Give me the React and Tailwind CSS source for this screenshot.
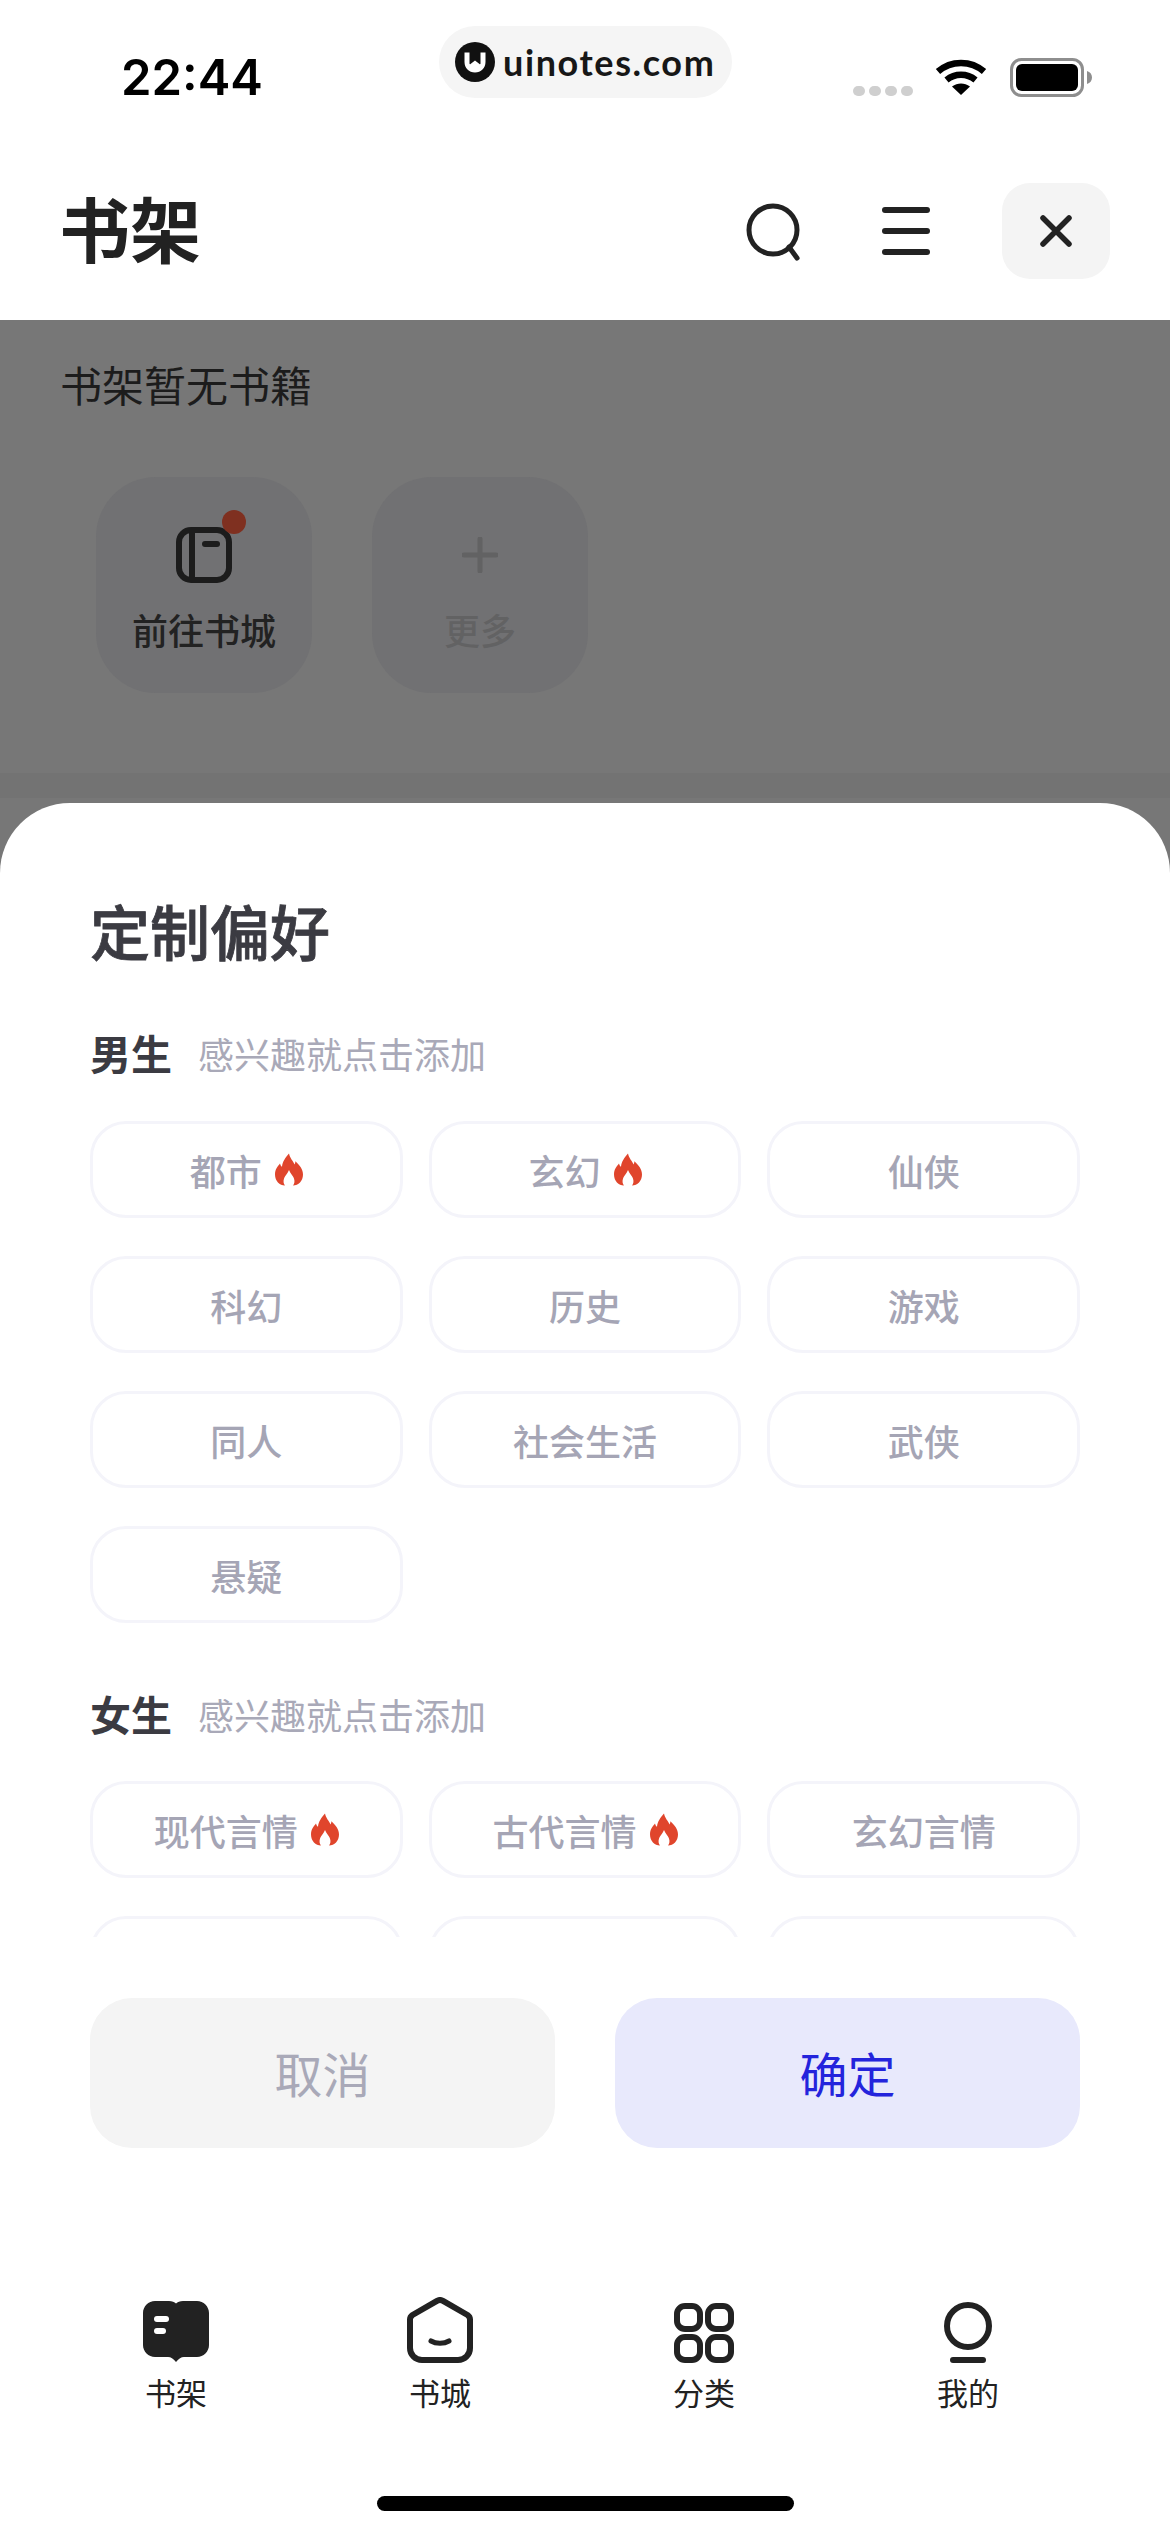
const CJK = { fontFamily: '"Noto Sans CJK SC", "Noto Sans", sans-serif' };

function Flame({ className }) {
  return (
    <svg viewBox="0 0 28 32" className={className}>
      <path
        fill="#e0452c"
        fillRule="evenodd"
        d="M14 0c1 5 4 7 5.500 11 .6-1 .9-2 .9-3.300C24.500 11.500 28 15.500 28 21c0 6.500-4.500 11-10 11 1.500-2 2-4.500.8-7.500-1-2.500-3.300-4.500-4.800-8-1.500 3.500-3.800 5.500-4.800 8C8 27.500 8.500 30 10 32 4.500 32 0 27.500 0 21c0-5 2.500-8 5-11 .4 1.500 1 2.500 2 3.300C7.500 8 10.500 4 14 0z"
      />
    </svg>
  );
}

function Chip({ label, hot }) {
  return (
    <div className="h-[97px] rounded-[36px] border-[3px] border-[#f4f4fa] bg-white flex items-center justify-center gap-[13px] text-[36px] font-medium text-[#a5a5b5]">
      <span>{label}</span>
      {hot && <Flame className="w-[28px] h-[33px]" />}
    </div>
  );
}

function SectionHead({ title }) {
  return (
    <div className="flex items-center h-[50px]">
      <span className="text-[41px] font-semibold text-[#3b3b42] w-[108px]">{title}</span>
      <span className="text-[36px] text-[#a9a9b8]">感兴趣就点击添加</span>
    </div>
  );
}

function NavItem({ label, children }) {
  return (
    <div className="w-[264px] flex flex-col items-center">
      <div className="h-[70px] flex items-end justify-center">{children}</div>
      <div className="mt-[11px] text-[31px] leading-[36px] text-[#222]">{label}</div>
    </div>
  );
}

function Logo() {
  return (
    <svg viewBox="0 0 40 40" className="w-[40px] h-[40px] shrink-0">
      <circle cx="20" cy="20" r="20" fill="#111" />
      <path
        fill="#fff"
        d="M9.500 10.500h5v11c0 .8.5 1 1 .6l4.500-3.600 4.500 3.600c.5.4 1 .2 1-.6v-11h5V20c0 6-4.500 10.500-10.500 10.500S9.500 26 9.500 20z"
      />
    </svg>
  );
}

export default function App() {
  return (
    <div className="w-[1170px] h-[2532px] overflow-hidden bg-white flex flex-col" style={CJK}>
      {/* Status bar */}
      <div className="h-[104px] relative shrink-0 flex justify-between items-start">
        <div
          className="mt-[52px] ml-[121px] text-[49px] leading-[52px] font-semibold text-black"
          style={{ fontFamily: 'Inter, sans-serif' }}
        >
          22:44
        </div>
        <div className="absolute left-[439px] top-[26px] w-[293px] h-[72px] rounded-[36px] bg-[#f5f5f5] flex items-center pl-[16px] gap-[8px]">
          <Logo />
          <span
            className="text-[36px] font-bold text-[#171717] tracking-[1.600px] leading-[40px]"
            style={{ fontFamily: 'Lato, sans-serif' }}
          >
            uinotes.com
          </span>
        </div>
        <div className="mt-[58px] mr-[78px] flex items-start">
          <div className="mt-[28px] flex gap-[4px]">
            <div className="w-[12px] h-[10px] rounded-full bg-[#cfcfcf]" />
            <div className="w-[12px] h-[10px] rounded-full bg-[#cfcfcf]" />
            <div className="w-[12px] h-[10px] rounded-full bg-[#cfcfcf]" />
            <div className="w-[12px] h-[10px] rounded-full bg-[#cfcfcf]" />
          </div>
          <svg viewBox="0 0 52 36" className="w-[52px] h-[36px] ml-[22px] mt-[1px]">
            <path fill="none" stroke="#000" strokeWidth="6.500" d="M3 12.500C16 1 36 1 49 12.500" />
            <path fill="none" stroke="#000" strokeWidth="6.500" d="M11.500 21c8.500-7 20.500-7 29 0" />
            <path fill="#000" d="M17 27.500c5.500-4 12.500-4 18 0L26 36z" />
          </svg>
          <svg viewBox="0 0 82 39" className="w-[82px] h-[39px] ml-[23px]">
            <rect x="1.500" y="1.500" width="71" height="36" rx="10" fill="none" stroke="#8e8e8e" strokeWidth="3" />
            <rect x="6" y="6" width="62" height="27" rx="6" fill="#000" />
            <path fill="#8e8e8e" d="M77 13c3 .8 5 3.200 5 6.500S80 25.200 77 26z" />
          </svg>
        </div>
      </div>

      {/* Header */}
      <div className="h-[216px] shrink-0 flex items-start pl-[59px] pr-[60px] relative">
        <div className="mt-[80px] text-[71px] leading-[84px] font-bold text-[#222]">书架</div>
        <div className="ml-auto mt-[79px] flex items-start">
          <svg viewBox="0 0 56 58" className="w-[56px] h-[58px] mr-[80px] mt-[20px] ml-[3px]">
            <circle cx="27" cy="27" r="24" fill="none" stroke="#222" strokeWidth="5" />
            <path d="M43 44l8 11" fill="none" stroke="#222" strokeWidth="5" strokeLinecap="round" />
          </svg>
          <div className="mr-[72px] mt-[24px] w-[48px] flex flex-col gap-[15px]">
            <div className="h-[6px] rounded-full bg-[#222]" />
            <div className="h-[6px] rounded-full bg-[#222]" />
            <div className="h-[6px] rounded-full bg-[#222]" />
          </div>
          <div className="w-[108px] h-[96px] rounded-[28px] bg-[#f4f4f4] flex items-center justify-center">
            <svg viewBox="0 0 32 32" className="w-[32px] h-[32px]">
              <path d="M3 3l26 26M29 3L3 29" fill="none" stroke="#222" strokeWidth="5.500" strokeLinecap="round" />
            </svg>
          </div>
        </div>
      </div>

      {/* Dimmed page */}
      <div className="flex-1 bg-[#777] flex flex-col min-h-0">
        <div className="h-[453px] shrink-0 pl-[60px]">
          <div className="pt-[39px] text-[42px] leading-[50px] text-[#1c1c1c]">书架暂无书籍</div>
          <div className="mt-[68px] ml-[36px] flex gap-[60px]">
            <div className="relative w-[216px] h-[216px] rounded-[60px] bg-[#717173] flex flex-col items-center">
              <svg viewBox="0 0 56 56" className="w-[56px] h-[56px] mt-[50px]">
                <rect x="3" y="3" width="50" height="50" rx="12" fill="none" stroke="#1c1c1c" strokeWidth="6" />
                <path d="M16 3v50" stroke="#1c1c1c" strokeWidth="6" />
                <path d="M29 17h12" stroke="#1c1c1c" strokeWidth="6" strokeLinecap="round" />
              </svg>
              <div className="absolute left-[126px] top-[33px] w-[24px] h-[24px] rounded-full bg-[#7f3020]" />
              <div className="mt-[24px] text-[36px] leading-[44px] font-medium text-[#222]">前往书城</div>
            </div>
            <div className="w-[216px] h-[216px] rounded-[60px] bg-[#717173] flex flex-col items-center">
              <svg viewBox="0 0 36 36" className="w-[36px] h-[36px] mt-[60px]">
                <path d="M18 2v32M2 18h32" stroke="#626263" strokeWidth="5" strokeLinecap="round" />
              </svg>
              <div className="mt-[34px] text-[36px] leading-[44px] font-medium text-[#626263]">更多</div>
            </div>
          </div>
        </div>
        <div className="h-[25px] shrink-0 bg-[#737373]" />
        <div className="h-[5px] shrink-0" />

        {/* Sheet */}
        <div className="flex-1 min-h-0 bg-white rounded-t-[70px] flex flex-col">
          <div className="px-[90px] pt-[92px] h-[1134px] shrink-0 overflow-hidden">
            <div className="text-[60px] leading-[70px] font-medium text-[#3b3b42] [-webkit-text-stroke:0.8px_#3b3b42]">定制偏好</div>
            <div className="mt-[63px]">
              <SectionHead title="男生" />
            </div>
            <div className="mt-[43px] grid grid-cols-3 gap-x-[26px] gap-y-[38px]">
              <Chip label="都市" hot />
              <Chip label="玄幻" hot />
              <Chip label="仙侠" />
              <Chip label="科幻" />
              <Chip label="历史" />
              <Chip label="游戏" />
              <Chip label="同人" />
              <Chip label="社会生活" />
              <Chip label="武侠" />
              <Chip label="悬疑" />
            </div>
            <div className="mt-[66px]">
              <SectionHead title="女生" />
            </div>
            <div className="mt-[42px] grid grid-cols-3 gap-x-[26px] gap-y-[38px]">
              <Chip label="现代言情" hot />
              <Chip label="古代言情" hot />
              <Chip label="玄幻言情" />
              <div className="h-[97px] rounded-[36px] border-[3px] border-[#f4f4fa]" />
              <div className="h-[97px] rounded-[36px] border-[3px] border-[#f4f4fa]" />
              <div className="h-[97px] rounded-[36px] border-[3px] border-[#f4f4fa]" />
            </div>
          </div>

          <div className="mt-[61px] px-[90px] flex gap-[60px]">
            <div className="w-[465px] h-[150px] rounded-[42px] bg-[#f4f4f4] flex items-center justify-center text-[48px] text-[#a9a9b8] pb-[2px]">
              取消
            </div>
            <div className="w-[465px] h-[150px] rounded-[42px] bg-[#e8e9fc] flex items-center justify-center text-[48px] text-[#2424dc] pb-[2px]">
              确定
            </div>
          </div>

          {/* Tab bar */}
          <div className="mt-[145px] pl-[44px] flex">
            <NavItem label="书架">
              <svg viewBox="0 0 66 64" className="w-[66px] h-[64px]">
                <path
                  fill="#222"
                  d="M12 2h14c3 0 5.500 1 7 2.500C34.500 3 37 2 40 2h14c6.500 0 12 5.500 12 12v32c0 6.500-5.500 12-12 12H41c-3 0-5 1.500-8 5-3-3.500-5-5-8-5H12C5.500 58 0 52.500 0 46V14C0 7.500 5.500 2 12 2z"
                />
                <rect x="11" y="17" width="15" height="6" rx="3" fill="#fff" />
                <rect x="11" y="29" width="12" height="6" rx="3" fill="#fff" />
              </svg>
            </NavItem>
            <NavItem label="书城">
              <svg viewBox="0 0 66 66" className="w-[66px] h-[66px]">
                <path
                  fill="none"
                  stroke="#222"
                  strokeWidth="6"
                  strokeLinejoin="round"
                  d="M3 22.500c0-2 1-3.500 2.500-4.500L30 3.800c2-1.100 4-1.100 6 0L60.500 18c1.500 1 2.500 2.500 2.500 4.500V51c0 6.500-5 12-12 12H15C8 63 3 57.500 3 51z"
                />
                <path d="M24 44c5 3 13 3 18 0" fill="none" stroke="#222" strokeWidth="5" strokeLinecap="round" />
              </svg>
            </NavItem>
            <NavItem label="分类">
              <svg viewBox="0 0 60 60" className="w-[60px] h-[60px]">
                <rect x="3" y="3" width="23" height="23" rx="8" fill="none" stroke="#222" strokeWidth="6" />
                <rect x="34" y="3" width="23" height="23" rx="8" fill="none" stroke="#222" strokeWidth="6" />
                <rect x="3" y="34" width="23" height="23" rx="8" fill="none" stroke="#222" strokeWidth="6" />
                <rect x="34" y="34" width="23" height="23" rx="8" fill="none" stroke="#222" strokeWidth="6" />
              </svg>
            </NavItem>
            <NavItem label="我的">
              <svg viewBox="0 0 48 61" className="w-[48px] h-[61px]">
                <circle cx="24" cy="24" r="21" fill="none" stroke="#222" strokeWidth="6" />
                <rect x="6" y="55" width="36" height="6" rx="3" fill="#222" />
              </svg>
            </NavItem>
          </div>

          {/* Home indicator */}
          <div className="mt-[86px] mx-auto w-[417px] h-[15px] rounded-full bg-black" />
        </div>
      </div>
    </div>
  );
}
